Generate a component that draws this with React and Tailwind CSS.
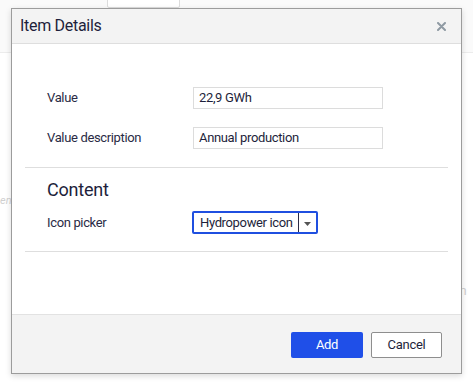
export default function App() {
  const font = { fontFamily: "Roboto, 'Liberation Sans', sans-serif" };
  return (
    <div className="relative w-[473px] h-[385px] overflow-hidden bg-[#fafafa]" style={font}>
      {/* background page hints */}
      <div className="absolute left-[107px] top-[-4px] w-[73px] h-[12px] border border-[#dcdcdc] bg-white rounded-[2px]" />
      <div className="absolute left-0 right-0 top-[52px] h-px bg-[#ececec]" />
      <div className="absolute left-0 right-0 top-[53px] bottom-0 bg-white" />
      <div className="absolute left-0 top-[193px] text-[11px] italic text-[#d0d0d0]">en</div>
      <div className="absolute left-[452px] top-[281px] text-[13px] text-[#d0d0d0]">on</div>

      {/* modal */}
      <div className="absolute left-[11px] top-[8px] w-[451px] h-[366px] flex flex-col border border-[#9c9c9c] bg-white shadow-[0_2px_6px_rgba(0,0,0,0.15)]">
        <div className="h-[35px] shrink-0 flex items-center justify-between pl-[8px] pr-[15px] bg-[#f3f3f3] border-b border-[#dedede]">
          <span className="text-[16px] tracking-[-0.3px] text-[#1e1f3b]">Item Details</span>
          <svg width="9" height="9" viewBox="0 0 9 9" className="mt-[1px]">
            <path d="M1 1L8 8M8 1L1 8" stroke="#8f9aa3" strokeWidth="2" strokeLinecap="round" />
          </svg>
        </div>

        <div className="flex-1 px-[13px] pt-[43px] text-[13px] tracking-[-0.35px]">
          <div className="px-[22px] flex flex-col gap-[18px]">
            <div className="flex items-center h-[22px]">
              <div className="w-[146px] text-[#2a2b45]">Value</div>
              <div className="w-[190px] h-[22px] border border-[#dcdcdc] px-[5px] flex items-center text-[#1e1f3b]">22,9 GWh</div>
            </div>
            <div className="flex items-center h-[22px]">
              <div className="w-[146px] text-[#2a2b45]">Value description</div>
              <div className="w-[190px] h-[22px] border border-[#dcdcdc] px-[5px] flex items-center text-[#1e1f3b]">Annual production</div>
            </div>
          </div>
          <div className="h-px bg-[#dedede] mt-[18px]" />
          <div className="px-[22px]">
            <div className="text-[18px] leading-[22px] tracking-[-0.2px] text-[#1e1f3b] mt-[11px]">Content</div>
            <div className="flex items-center mt-[10px]">
              <div className="w-[145px] text-[#2a2b45]">Icon picker</div>
              <div className="w-[126px] h-[23px] border-2 border-[#1f4fe0] rounded-[2px] flex items-stretch">
                <div className="w-[105px] flex items-center pl-[6px] whitespace-nowrap text-[#1e1f3b] border-r border-[#2a2b45]">Hydropower icon</div>
                <div className="flex-1 flex items-center justify-center">
                  <svg width="7" height="4" viewBox="0 0 7 4" className="mt-[3px]"><path d="M0 0H7L3.5 4Z" fill="#555" /></svg>
                </div>
              </div>
            </div>
          </div>
          <div className="h-px bg-[#dedede] mt-[17px]" />
        </div>

        <div className="h-[59px] shrink-0 bg-[#f3f3f3] border-t border-[#e2e2e2] flex items-center justify-end gap-[8px] pr-[19px] pt-[2px] text-[13px] tracking-[-0.3px]">
          <button className="w-[72px] h-[26px] bg-[#1f4fe8] rounded-[2px] text-white">Add</button>
          <button className="w-[71px] h-[26px] bg-white border border-[#8e8e8e] rounded-[2px] text-[#1e1f3b]">Cancel</button>
        </div>
      </div>
    </div>
  );
}
